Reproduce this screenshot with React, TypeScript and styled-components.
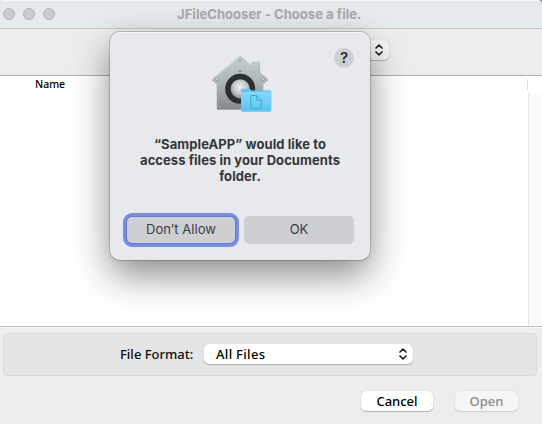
import React from 'react';
import styled, { createGlobalStyle } from 'styled-components';

const system = "Inter, 'Liberation Sans', sans-serif";
const lucida = "'Noto Sans', 'Open Sans', sans-serif";

const GlobalStyle = createGlobalStyle`
  *, *::before, *::after { box-sizing: border-box; }
  body { margin: 0; overflow: hidden; background: #9795b8; }
  button { margin: 0; padding: 0; border: 0; font: inherit; }
`;

const Window = styled.main`
  position: relative;
  width: 542px;
  height: 424px;
  display: flex;
  flex-direction: column;
  overflow: hidden;
  background: #ededed;
  border-radius: 2px 5px 0 0;
  font-family: ${lucida};
  color: #0c0c0c;
`;

const TitleBar = styled.header`
  flex: 0 0 29px;
  display: grid;
  grid-template-columns: 177px 1fr;
  align-items: center;
  padding-bottom: 1px;
  background: #e5eaed;
  border-top: 1px solid #f3f5f6;
  border-bottom: 1px solid #c5c7c9;
`;

const Lights = styled.div`
  display: flex;
  gap: 8px;
  padding-left: 3px;
`;

const Light = styled.span`
  width: 12px;
  height: 12px;
  border-radius: 50%;
  background: #cacdcf;
  border: 1px solid #b0b3b5;
`;

const Title = styled.h1`
  margin: 0;
  font: 700 13px/16px ${system};
  letter-spacing: 0.05px;
  color: #a5a9ab;
  white-space: nowrap;
`;

const Toolbar = styled.div`
  flex: 0 0 47px;
  display: flex;
  justify-content: center;
  padding-top: 11px;
  border-bottom: 1px solid #adadad;
`;

const Select = styled.button<{ $width: number; $tone?: string }>`
  width: ${p => p.$width}px;
  height: 20px;
  display: flex;
  align-items: center;
  justify-content: space-between;
  padding: 0 5px 0 12px;
  border-radius: 5px;
  background: ${p => p.$tone ?? '#fff'};
  box-shadow: 0 0 1px rgba(0, 0, 0, 0.22), 0 1px 1px rgba(0, 0, 0, 0.22);
  color: #000;
`;

const Label = styled.span<{ $spacing?: number }>`
  font: 500 13px/18px ${lucida};
  letter-spacing: ${p => p.$spacing ?? 0}px;
  white-space: nowrap;
`;

const FileTable = styled.section`
  flex: 0 0 251px;
  display: flex;
  flex-direction: column;
  background: #fff;
  border-bottom: 1px solid #c5c5c5;
`;

const TableHeader = styled.div`
  flex: 0 0 17px;
  display: flex;
  justify-content: space-between;
  padding: 0 14px 0 35px;
  font: 500 10.5px/16px ${lucida};
  color: #000;
`;

const ColumnDivider = styled.i`
  width: 1px;
  height: 11px;
  margin-top: 3px;
  background: #dedede;
`;

const TableBody = styled.div`
  flex: 1;
  display: flex;
  justify-content: flex-end;
`;

const ScrollTrack = styled.div`
  width: 14px;
  background: #fafafa;
  border-left: 1px solid #e6e6e6;
`;

const Footer = styled.footer`
  flex: 1;
  padding: 5px 5px 0 3px;
  border-top: 1px solid #f8f8f8;
`;

const FormatPanel = styled.div`
  height: 43px;
  display: flex;
  align-items: center;
  gap: 9px;
  padding: 0 0 2px 116px;
  background: #e5e5e5;
  border: 1px solid #dadada;
  border-radius: 4px;
`;

const FormatLabel = styled(Label)`
  width: 75px;
  padding-top: 1px;
`;

const Actions = styled.div`
  display: flex;
  justify-content: flex-end;
  gap: 22px;
  padding: 15px 19px 0 0;
`;

const ActionButton = styled.button<{ $width: number; $disabled?: boolean }>`
  width: ${p => p.$width}px;
  height: 20px;
  border-radius: 5px;
  background: ${p => (p.$disabled ? '#f6f6f6' : '#fff')};
  color: ${p => (p.$disabled ? '#8b8b8b' : '#000')};
  box-shadow: 0 0 1px rgba(0, 0, 0, 0.22), 0 1px 1px rgba(0, 0, 0, ${p => (p.$disabled ? 0.12 : 0.22)});
  display: flex;
  justify-content: center;
  align-items: center;
  padding-bottom: 1px;
`;

const Dialog = styled.section`
  position: absolute;
  left: 110px;
  top: 32px;
  width: 260px;
  height: 228px;
  display: flex;
  flex-direction: column;
  align-items: center;
  padding: 20px 14px 16px;
  border-radius: 10px;
  background: #e8e9ed;
  box-shadow: 0 0 0 1px rgba(0, 0, 0, 0.18), inset 0 1px 0 rgba(255, 255, 255, 0.6),
    0 15px 36px rgba(0, 0, 0, 0.46);
  font-family: ${system};
  color: #35363a;
`;

const HelpButton = styled.button`
  position: absolute;
  top: 16px;
  right: 16px;
  width: 20px;
  height: 20px;
  border-radius: 50%;
  background: #cecfd3;
  color: #29292b;
  font: 600 15px/20px ${system};
`;

const Message = styled.p`
  margin: 22px 0 0;
  font-weight: 700;
  font-size: 13px;
  line-height: 16px;
  text-align: center;
  white-space: nowrap;
`;

const MessageLine = styled.span<{ $spacing: number }>`
  display: block;
  letter-spacing: ${p => p.$spacing}px;
`;

const Choices = styled.div`
  margin-top: auto;
  width: 228px;
  display: flex;
  justify-content: space-between;
`;

const Choice = styled.button<{ $focused?: boolean }>`
  width: ${p => (p.$focused ? 108 : 110)}px;
  height: ${p => (p.$focused ? 26 : 28)}px;
  margin: ${p => (p.$focused ? '1px 0 1px 1px' : '0')};
  border-radius: 5px;
  background: #cecfd3;
  box-shadow: ${p => (p.$focused ? '0 0 0 1px #657acb, 0 0 0 4px #768de2' : 'none')};
  color: #3b3c3f;
  font: 400 13px/24px ${system};
  letter-spacing: 0.03px;
  padding-bottom: 2px;
`;

const Chevrons = () => (
  <svg width="10" height="14" viewBox="0 0 10 14" fill="none" stroke="#222" strokeWidth="1.7" strokeLinecap="round" strokeLinejoin="round">
    <path d="M2 5 5 2.2 8 5M2 9l3 2.8L8 9" />
  </svg>
);

const HouseArt = styled.svg`
  flex: none;
  margin-left: 4px;
`;

const HouseIcon = () => (
  <HouseArt width="60" height="62" viewBox="0 0 60 62">
    <defs>
      <linearGradient id="steel" x1="0" y1="0" x2="0" y2="1">
        <stop stopColor="#c4d1d1" />
        <stop offset=".5" stopColor="#acb4b6" />
        <stop offset="1" stopColor="#85898d" />
      </linearGradient>
      <radialGradient id="knob" cx=".5" cy=".42" r=".6">
        <stop stopColor="#eef0f1" />
        <stop offset=".55" stopColor="#c6cacd" />
        <stop offset="1" stopColor="#83898c" />
      </radialGradient>
      <linearGradient id="folder" x1="0" y1="0" x2="0" y2="1">
        <stop stopColor="#84d9fb" />
        <stop offset="1" stopColor="#5dc4ef" />
      </linearGradient>
    </defs>
    <path d="M27 5q1-.8 2 0L40.2 14.3V10h7.6v10.7l7.9 6.3q.8.8 0 1.5L51 32V57H5V32L.4 28.5q-.8-.7 0-1.5Z" fill="url(#steel)" stroke="#a4adaf" strokeWidth=".5" />
    <path d="M27.5 5 .8 27.4M40.2 10h7.6" stroke="#d4dddd" strokeWidth=".7" fill="none" />
    <path d="M5 57h24" stroke="#767a7e" />
    <g fill="#d4dadd" stroke="#7c8589" strokeWidth=".6">
      <circle cx="28" cy="8.4" r="1.5" />
      <circle cx="5" cy="27.1" r="1.5" />
      <circle cx="51" cy="27.1" r="1.5" />
      <circle cx="7.9" cy="54.4" r=".9" />
    </g>
    <path d="M26 18.5h4l-2 2z" fill="#758387" />
    <circle cx="28.2" cy="36.8" r="15" fill="#292d2f" />
    <circle cx="28.2" cy="36.8" r="12.3" fill="none" stroke="#3c4245" strokeWidth=".8" strokeDasharray="1 2" />
    <circle cx="28.2" cy="36.8" r="9.6" fill="url(#knob)" />
    <path d="M29 38q0-1.2 1.2-1.2H37q1 0 1.8.9l.9.8H58q1.2 0 1.2 1.2V58q0 1.6-1.6 1.6H30.5Q29 59.6 29 58Z" fill="#62c5ed" />
    <path d="M29 40h30.2v18q0 1.6-1.6 1.6H30.5Q29 59.6 29 58Z" fill="url(#folder)" />
    <path d="M38.7 43.5h6l4.7 4.6v8.4H38.7Zm5.8 0v4.8h4.9" fill="none" stroke="#3fabd7" strokeWidth="1" />
  </HouseArt>
);

export default function App() {
  return (
    <>
      <GlobalStyle />
      <Window>
        <TitleBar>
          <Lights><Light /><Light /><Light /></Lights>
          <Title>JFileChooser - Choose a file.</Title>
        </TitleBar>
        <Toolbar>
          <Select $width={236} $tone="#f8f8f8" aria-label="Folder"><span /><Chevrons /></Select>
        </Toolbar>
        <FileTable>
          <TableHeader><span>Name</span><ColumnDivider /></TableHeader>
          <TableBody><ScrollTrack /></TableBody>
        </FileTable>
        <Footer>
          <FormatPanel>
            <FormatLabel>File Format:</FormatLabel>
            <Select $width={209}><Label $spacing={0.3}>All Files</Label><Chevrons /></Select>
          </FormatPanel>
          <Actions>
            <ActionButton $width={72}><Label>Cancel</Label></ActionButton>
            <ActionButton $width={63} $disabled disabled><Label>Open</Label></ActionButton>
          </Actions>
        </Footer>
        <Dialog role="dialog">
          <HelpButton>?</HelpButton>
          <HouseIcon />
          <Message>
            <MessageLine $spacing={0.08}>“SampleAPP” would like to</MessageLine>
            <MessageLine $spacing={0.06}>access files in your Documents</MessageLine>
            <MessageLine $spacing={0.08}>folder.</MessageLine>
          </Message>
          <Choices>
            <Choice $focused>Don’t Allow</Choice>
            <Choice>OK</Choice>
          </Choices>
        </Dialog>
      </Window>
    </>
  );
}
